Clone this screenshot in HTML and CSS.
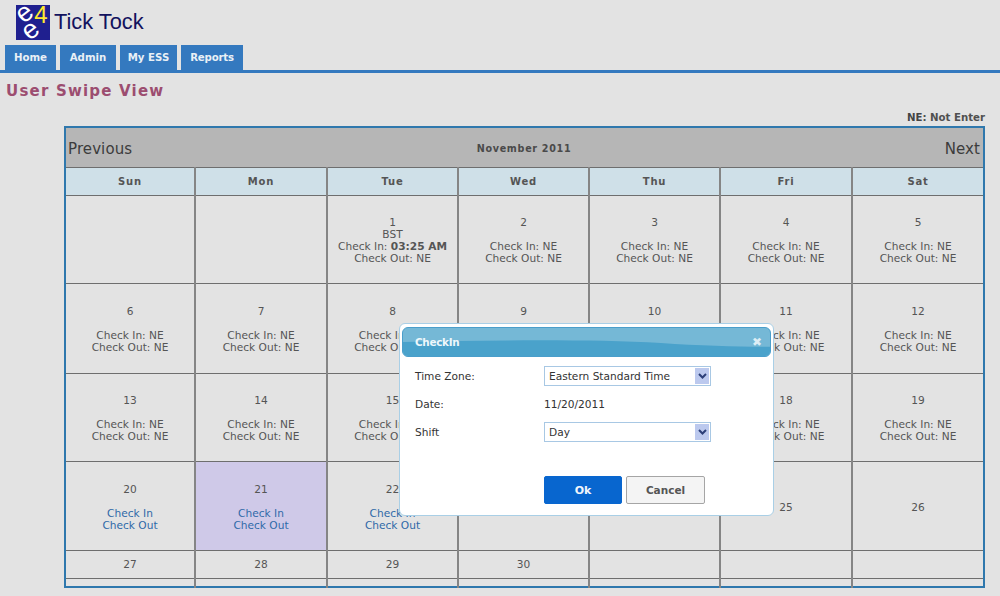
FILE: index.html
```html
<!DOCTYPE html>
<html lang="en">
<head>
  <meta charset="UTF-8">
  <title>User Swipe View</title>
  <link rel="stylesheet" href="styles.css">
</head>
<body>
  <div class="brand">
    <svg class="logo" width="34" height="35" viewBox="0 0 34 35" overflow="visible">
      <rect width="34" height="35" fill="#1f1f8f"/>
      <text x="9" y="16" text-anchor="middle" class="logo-e" transform="rotate(-38 9 9)">e</text>
      <text x="15" y="33" text-anchor="middle" class="logo-e" transform="rotate(-38 15 26)">e</text>
      <text x="25" y="18" text-anchor="middle" class="logo-4">4</text>
    </svg>
    <span class="brand-name">Tick Tock</span>
  </div>

  <ul class="nav">
    <li class="tab-home">Home</li>
    <li class="tab-admin">Admin</li>
    <li class="tab-ess">My ESS</li>
    <li class="tab-reports">Reports</li>
  </ul>

  <h1 class="page-title">User Swipe View</h1>
  <p class="legend"><b>NE</b>: Not Enter</p>

  <table class="calendar">
    <colgroup>
      <col class="col-s"><col class="col-l"><col class="col-m"><col class="col-m"><col class="col-m"><col class="col-l"><col>
    </colgroup>
    <tr class="cal-top">
      <td colspan="7">
        <div class="cal-top-inner">
          <span>Previous</span>
          <b class="month">November 2011</b>
          <span class="next">Next</span>
        </div>
      </td>
    </tr>
    <tr class="days">
      <th>Sun</th><th>Mon</th><th>Tue</th><th>Wed</th><th>Thu</th><th>Fri</th><th>Sat</th>
    </tr>
    <tr class="r1">
      <td></td>
      <td></td>
      <td>1<br>BST<br>Check In: <b>03:25 AM</b><br>Check Out: NE</td>
      <td>2<br><br>Check In: NE<br>Check Out: NE</td>
      <td>3<br><br>Check In: NE<br>Check Out: NE</td>
      <td>4<br><br>Check In: NE<br>Check Out: NE</td>
      <td>5<br><br>Check In: NE<br>Check Out: NE</td>
    </tr>
    <tr class="r2">
      <td>6<br><br>Check In: NE<br>Check Out: NE</td>
      <td>7<br><br>Check In: NE<br>Check Out: NE</td>
      <td>8<br><br>Check In: NE<br>Check Out: NE</td>
      <td>9<br><br>Check In: NE<br>Check Out: NE</td>
      <td>10<br><br>Check In: NE<br>Check Out: NE</td>
      <td>11<br><br>Check In: NE<br>Check Out: NE</td>
      <td>12<br><br>Check In: NE<br>Check Out: NE</td>
    </tr>
    <tr class="r3">
      <td>13<br><br>Check In: NE<br>Check Out: NE</td>
      <td>14<br><br>Check In: NE<br>Check Out: NE</td>
      <td>15<br><br>Check In: NE<br>Check Out: NE</td>
      <td>16<br><br>Check In: NE<br>Check Out: NE</td>
      <td>17<br><br>Check In: NE<br>Check Out: NE</td>
      <td>18<br><br>Check In: NE<br>Check Out: NE</td>
      <td>19<br><br>Check In: NE<br>Check Out: NE</td>
    </tr>
    <tr class="r4">
      <td>20<br><br><a href="#">Check In</a><br><a href="#">Check Out</a></td>
      <td class="today">21<br><br><a href="#">Check In</a><br><a href="#">Check Out</a></td>
      <td>22<br><br><a href="#">Check In</a><br><a href="#">Check Out</a></td>
      <td>23</td>
      <td>24</td>
      <td>25</td>
      <td>26</td>
    </tr>
    <tr class="r5">
      <td>27</td><td>28</td><td>29</td><td>30</td><td></td><td></td><td></td>
    </tr>
    <tr class="r6">
      <td></td><td></td><td></td><td></td><td></td><td></td><td></td>
    </tr>
  </table>

  <div class="dialog">
    <div class="dialog-head">
      <svg class="dialog-wave" width="370" height="30" viewBox="0 0 370 30" preserveAspectRatio="none">
        <path d="M0 15 C90 13 190 12 260 16 C300 19 340 20 370 20 V30 H0 Z" fill="#4aa2cb"/>
      </svg>
      <span class="dialog-title">CheckIn</span>
      <span class="dialog-close">&#10006;</span>
    </div>
    <div class="dialog-body">
      <div class="field">
        <label>Time Zone:</label>
        <div class="select">Eastern Standard Time<span class="arrow"><svg width="9" height="6" viewBox="0 0 9 6"><path d="M1 1 L4.5 4.5 L8 1" fill="none" stroke="#2c3f78" stroke-width="2"/></svg></span></div>
      </div>
      <div class="field">
        <label>Date:</label>
        <span>11/20/2011</span>
      </div>
      <div class="field">
        <label>Shift</label>
        <div class="select">Day<span class="arrow"><svg width="9" height="6" viewBox="0 0 9 6"><path d="M1 1 L4.5 4.5 L8 1" fill="none" stroke="#2c3f78" stroke-width="2"/></svg></span></div>
      </div>
      <div class="buttons">
        <button class="btn btn-ok">Ok</button>
        <button class="btn btn-cancel">Cancel</button>
      </div>
    </div>
  </div>
</body>
</html>
```

FILE: styles.css
```css
/* ---------- page ---------- */
*{box-sizing:border-box;}

html,body{height:596px;overflow:hidden;}

body{
  margin:0;
  background:#e3e3e3;
  color:#555;
  font-family:"DejaVu Sans",Verdana,sans-serif;
  font-size:10.6px;
  position:relative;
}

/* ---------- header ---------- */
.brand{
  display:flex;
  align-items:center;
  height:45px;
  padding:0 0 1px 16px;
}

.logo{display:block;}

.logo-e{
  font-family:"Liberation Sans",sans-serif;
  font-size:27px;
  fill:#fff;
}

.logo-4{
  font-family:"Liberation Sans",sans-serif;
  font-size:24px;
  fill:#ffe92e;
}

.brand-name{
  font-family:"Liberation Sans",Arial,sans-serif;
  font-size:21.8px;
  color:#12125e;
  margin-left:4px;
}

.nav{
  display:flex;
  gap:4px;
  list-style:none;
  margin:0;
  padding:0 0 0 5px;
  height:28px;
  border-bottom:3px solid #3479bf;
}

.nav li{
  background:#3479bf;
  color:#e9f0f6;
  font-weight:bold;
  font-size:10.2px;
  line-height:26px;
  height:25px;
  text-align:center;
}

.tab-home{width:51px;}
.tab-admin{width:56px;}
.tab-ess{width:57px;}
.tab-reports{width:62px;letter-spacing:-.2px;}

.page-title{
  margin:8px 0 0 6px;
  font-size:15px;
  line-height:20px;
  font-weight:bold;
  letter-spacing:1.2px;
  color:#9c4d70;
}

.legend{
  margin:10px 15px 0 0;
  text-align:right;
  font-size:10.2px;
  line-height:14px;
  font-weight:bold;
  color:#505050;
}

.legend b{color:#444;}

/* ---------- calendar ---------- */
.calendar{
  margin:1px 0 0 64px;
  width:921px;
  table-layout:fixed;
  border-collapse:collapse;
  border:2px solid #2f78ad;
}

.col-s{width:130px;}
.col-m{width:131px;}
.col-l{width:132px;}

.calendar td,
.calendar th{
  border:1px solid #6e6e6e;
  border-left:2px solid #858585;
  padding:2px 0 0;
  text-align:center;
  vertical-align:middle;
  line-height:12px;
  color:#555;
}

.calendar tr > :first-child{border-left:0;}

.cal-top td{
  background:#b6b6b6;
  height:40px;
  border-left:0;
  border-top:0;
  padding:0;
}

.cal-top-inner{
  display:grid;
  grid-template-columns:1fr auto 1fr;
  align-items:center;
  padding:3px 3px 0 2px;
  font-size:15px;
  letter-spacing:.1px;
  color:#3c3c3c;
}

.cal-top-inner span{text-align:left;}
.cal-top-inner .next{text-align:right;}

.month{
  font-size:9.6px;
  letter-spacing:.7px;
  color:#4a4a4a;
}

.days th{
  height:28px;
  background:#cfe0e8;
  font-size:10px;
  letter-spacing:.8px;
}

.r1 td{height:88px;}
.r2 td{height:90px;}
.r3 td{height:88px;}
.r4 td{height:89px;}
.calendar .r5 td{height:28px;padding:0;}
.calendar .r6 td{height:9px;padding:0;}

.calendar a{
  color:#2f69a8;
  text-decoration:none;
}

.calendar .today{background:#cfc9e8;}

/* ---------- dialog ---------- */
.dialog{
  position:absolute;
  left:399px;
  top:323px;
  width:375px;
  height:193px;
  padding:3px 2px 0;
  background:#fff;
  border:1px solid #a9cfe6;
  border-radius:6px;
  color:#333;
}

.dialog-head{
  position:relative;
  height:30px;
  background:#75b8d6;
  border:1px solid #4a9ecb;
  border-radius:6px;
  overflow:hidden;
  display:flex;
  justify-content:space-between;
  align-items:center;
  padding:0 8px 0 12px;
}

.dialog-wave{
  position:absolute;
  left:0;
  top:0;
  width:100%;
  height:100%;
}

.dialog-title{
  position:relative;
  color:#eef7fb;
  font-weight:bold;
  font-size:10.4px;
  letter-spacing:-.3px;
}

.dialog-close{
  position:relative;
  color:#dcedf5;
  font-size:12px;
}

.dialog-body{padding:9px 0 0 13px;}

.field{
  display:flex;
  align-items:center;
  height:20px;
  margin-bottom:8px;
}

.field label{width:129px;}

.select{
  position:relative;
  width:167px;
  height:20px;
  line-height:18px;
  padding-left:4px;
  border:1px solid #a8c8e4;
  background:#fff;
}

.arrow{
  position:absolute;
  right:1px;
  top:1px;
  width:14px;
  height:16px;
  background:#bcc9ee;
  display:flex;
  align-items:center;
  justify-content:center;
}

.buttons{
  display:flex;
  gap:4px;
  margin:34px 0 0 129px;
}

.btn{
  width:78px;
  height:28px;
  padding:0;
  border-radius:2px;
  font-family:"DejaVu Sans",Verdana,sans-serif;
  font-size:10.5px;
  font-weight:bold;
}

.btn-ok{
  background:#0866cf;
  border:1px solid #0866cf;
  color:#f2f6fb;
  font-size:11px;
}

.btn-cancel{
  width:79px;
  background:#f4f4f4;
  border:1px solid #a5a5a5;
  color:#555;
}
```
